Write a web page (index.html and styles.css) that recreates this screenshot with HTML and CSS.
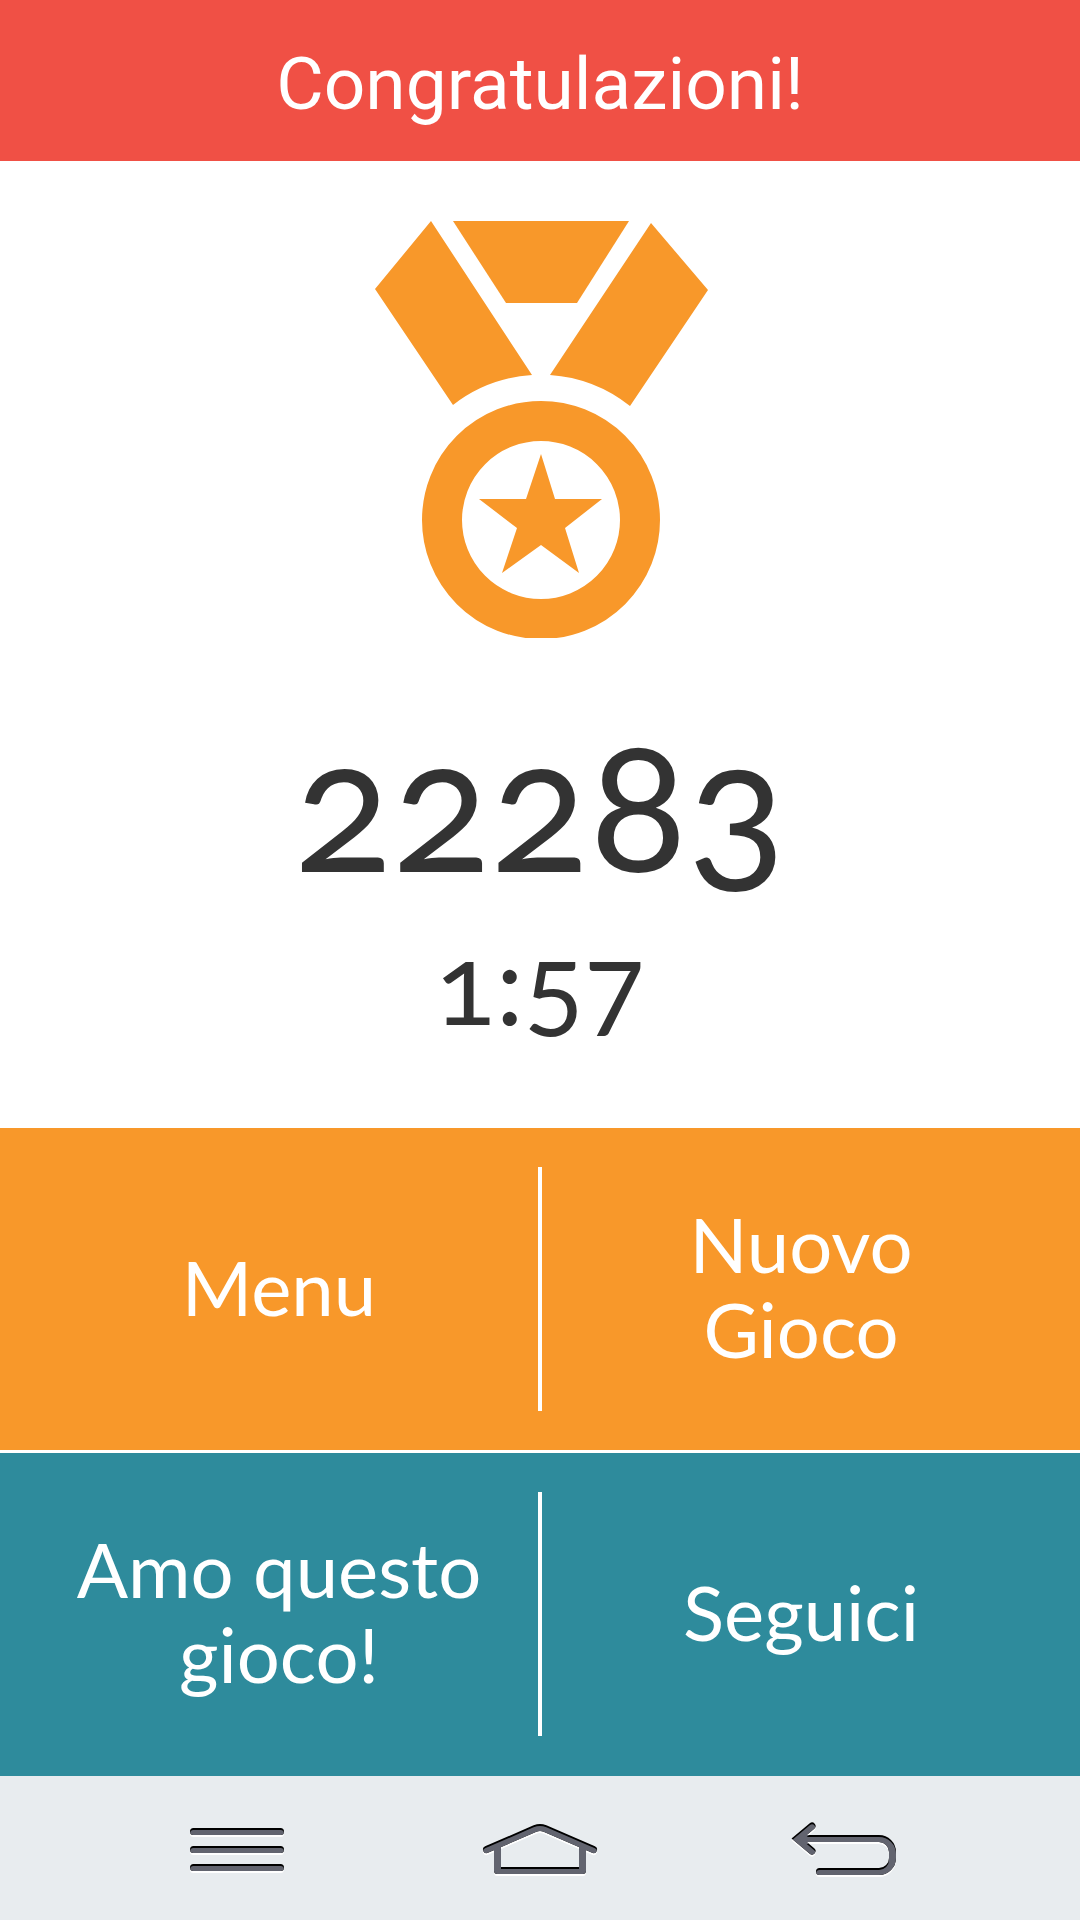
FILE: index.html
```html
<!DOCTYPE html>
<html lang="it">
<head>
<meta charset="utf-8">
<meta name="viewport" content="width=device-width, initial-scale=1">
<title>Congratulazioni!</title>
<link rel="stylesheet" href="styles.css">
</head>
<body>
<header class="header">
  <h1 class="title">Congratulazioni!</h1>
</header>
<main class="result">
  <svg class="medal" viewBox="-1 0 335 417" aria-hidden="true">
    <path d="M57 0 1 68 79 184A145 145 0 0 1 158 154Z"/>
    <path d="M79 0H255L203 82H132Z"/>
    <path d="M277 2 334 69 256 185A145 145 0 0 0 176 154Z"/>
    <circle class="medal-ring" cx="167" cy="299" r="99"/>
    <path d="M167 233 181 278H228L191 307 205 352 167 324 128 352 143 307 105 278H152Z"/>
  </svg>
  <p class="score">22283</p>
  <p class="time">1:57</p>
</main>
<section class="actions">
  <div class="row row-play">
    <button class="action" type="button">Menu</button>
    <span class="divider"></span>
    <button class="action" type="button">Nuovo<br>Gioco</button>
  </div>
  <div class="row row-social">
    <button class="action" type="button">Amo questo<br>gioco!</button>
    <span class="divider"></span>
    <button class="action" type="button">Seguici</button>
  </div>
</section>
<nav class="navbar">
  <button class="nav-button" type="button" aria-label="Opzioni">
    <svg class="nav-icon" viewBox="0 0 120 64" aria-hidden="true">
      <defs>
        <path id="menu" d="M15.500 15.500H102.500M15.500 33.500H102.500M15.500 51.500H102.500"/>
        <mask id="menu-face" maskUnits="userSpaceOnUse" x="0" y="0" width="120" height="64"><use href="#menu" class="mask" y="2"/></mask>
      </defs>
      <use href="#menu" class="glow" y="2"/>
      <use href="#menu" class="edge"/>
      <g mask="url(#menu-face)"><use href="#menu" class="face"/></g>
    </svg>
  </button>
  <button class="nav-button" type="button" aria-label="Home">
    <svg class="nav-icon" viewBox="0 0 120 64" aria-hidden="true">
      <defs>
        <path id="home" d="M6.500 33.500 55 12.500Q60 10.500 65 12.500L113.500 33.500M17.500 32V54.500H102.500V32"/>
        <mask id="home-face" maskUnits="userSpaceOnUse" x="0" y="0" width="120" height="64"><use href="#home" class="mask" y="2"/></mask>
      </defs>
      <use href="#home" class="glow" y="2"/>
      <use href="#home" class="edge"/>
      <g mask="url(#home-face)"><use href="#home" class="face"/></g>
    </svg>
  </button>
  <button class="nav-button" type="button" aria-label="Indietro">
    <svg class="nav-icon" viewBox="0 0 120 64" aria-hidden="true">
      <defs>
        <g id="back">
          <path class="arrow-head" d="M30 10 15 22.500 30 35"/>
          <path d="M19 22.500H97A13.500 13.500 0 0 1 110.500 36V42A13.500 13.500 0 0 1 97 55.500H37.500"/>
        </g>
        <mask id="back-face" maskUnits="userSpaceOnUse" x="0" y="0" width="120" height="64"><use href="#back" class="mask" y="2"/></mask>
      </defs>
      <use href="#back" class="glow" y="2"/>
      <use href="#back" class="edge"/>
      <g mask="url(#back-face)"><use href="#back" class="face"/></g>
    </svg>
  </button>
</nav>
</body>
</html>
```
FILE: styles.css
```css
* {
  box-sizing: border-box;
}

body {
  margin: 0;
  min-height: 100vh;
  display: flex;
  flex-direction: column;
  background: #fff;
  font-family: Lato, sans-serif;
}

.header {
  padding: 42px 20px 35px;
  background: #f05045;
}

.title {
  margin: 0;
  color: #fff;
  font: 400 73px/84px Roboto, sans-serif;
  text-align: center;
}

.result {
  flex: 1;
  display: flex;
  flex-direction: column;
  align-items: center;
  padding-top: 60px;
  color: #333;
}

.medal {
  width: 335px;
  fill: #f8982a;
}

.medal-ring {
  fill: none;
  stroke: #f8982a;
  stroke-width: 40;
}

.score,
.time {
  margin: 0;
  font-variant-numeric: oldstyle-nums;
}

.score {
  margin-top: 64px;
  font-size: 182px;
  line-height: 200px;
}

.time {
  font-size: 112px;
  line-height: 160px;
}

.row {
  display: grid;
  grid-template-columns: 1fr 4px 1fr;
  padding: 39px 20px;
}

.row-play {
  background: #f8982a;
}

.row-social {
  margin-top: 3px;
  padding-bottom: 40px;
  background: #2e8b9c;
}

.divider {
  background: #fff;
}

.action {
  min-height: 244px;
  padding: 0 0 6px;
  border: 0;
  background: none;
  color: #fff;
  font: 400 76px/85px Lato, sans-serif;
}

.navbar {
  display: grid;
  grid-template-columns: repeat(3, 1fr);
  padding: 40px 8%;
  background: #e8ecef;
}

.nav-button {
  padding: 0;
  border: 0;
  background: none;
}

.nav-icon {
  display: block;
  width: 120px;
  margin: 0 auto;
  fill: none;
  stroke-width: 7;
  stroke-linecap: round;
  stroke-linejoin: round;
}

.arrow-head {
  stroke-linejoin: miter;
}

.glow {
  stroke: #fff;
}

.edge {
  stroke: #000;
}

.face {
  stroke: #62646f;
}

.mask {
  stroke: #fff;
}
```
